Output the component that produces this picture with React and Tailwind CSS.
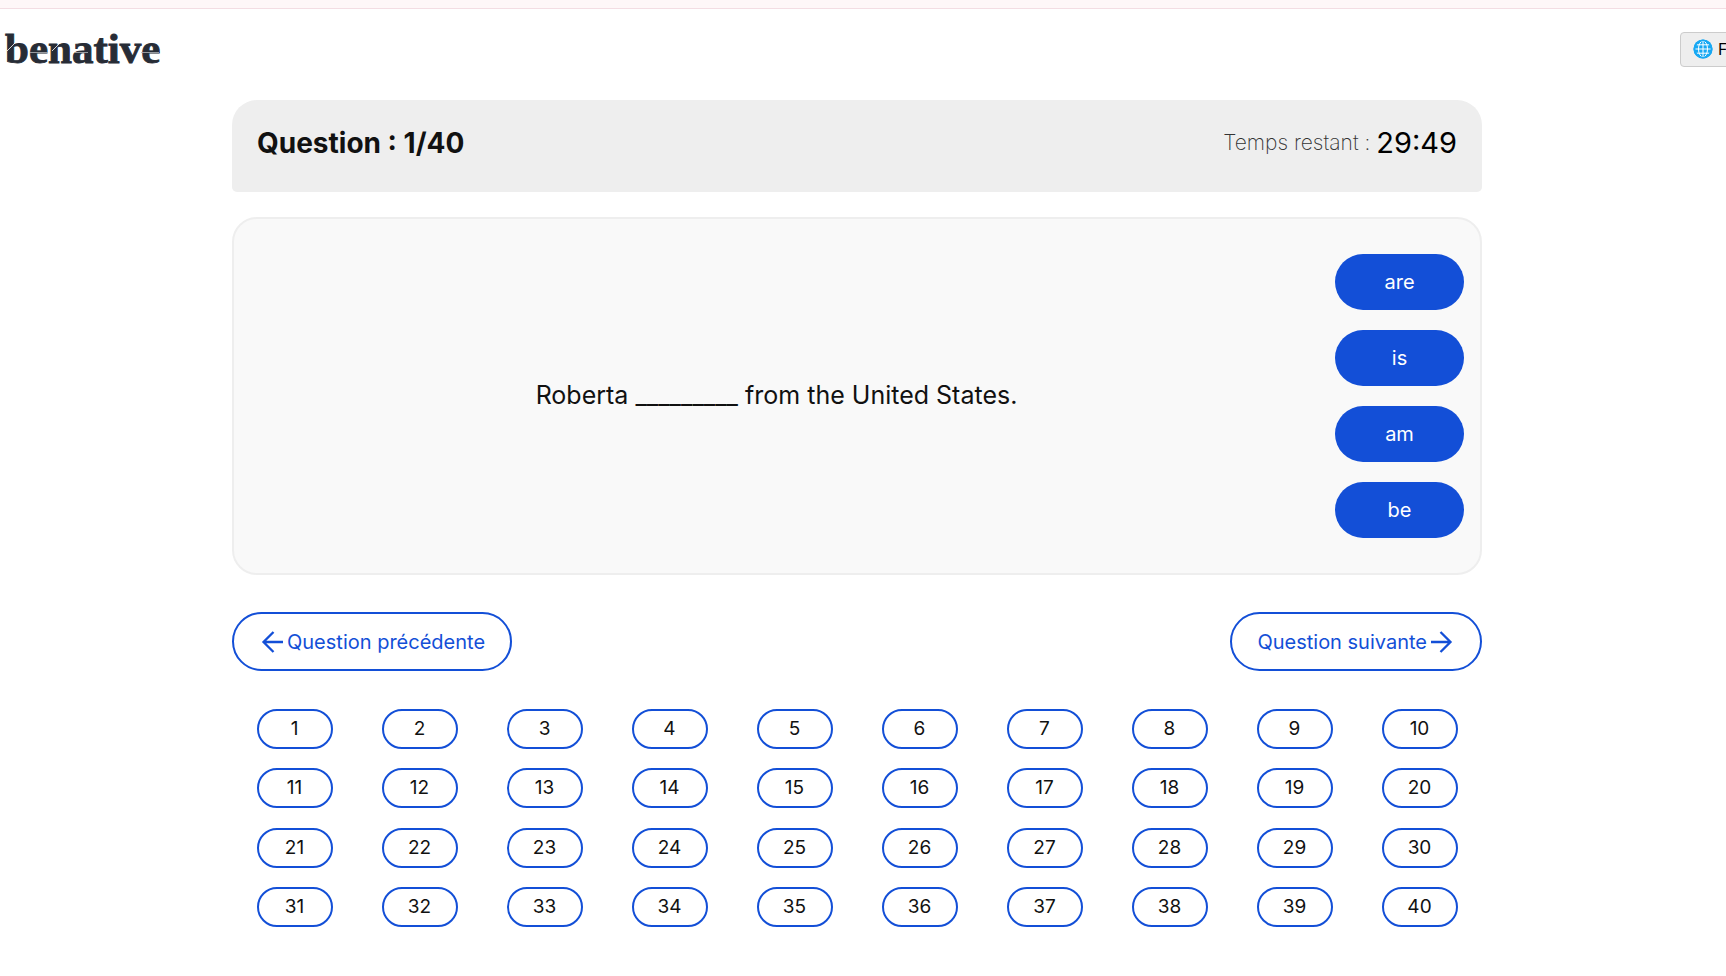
import { useState } from "react";

const choices = ["are", "is", "am", "be"];
const questions = Array.from({ length: 40 }, (_, i) => i + 1);

function Logo() {
    return (
        <svg className="h-12 w-[170px]" viewBox="0 0 170 48">
            <text x="5" y="38" fontSize="43" fontWeight="700" fill="#272c36" stroke="#272c36" strokeWidth="0.9" className="font-['Liberation_Serif',serif]">
                benative
            </text>
            <path d="M7 26l8-8M52 26l8-8" stroke="#ffffff" strokeWidth="0.8" />
            <path d="M30 27.5h18M75 27.5h13M141 27.5h18" stroke="#b4b6ba" strokeWidth="0.8" />
        </svg>
    );
}

function Globe() {
    return (
        <svg className="size-5 shrink-0" viewBox="0 0 20 20" fill="none" stroke="#17a8f3" strokeWidth="1.9" aria-hidden="true">
            <circle cx="10" cy="10" r="9.5" fill="#17a8f3" stroke="none" />
            <g stroke="#ffffff" strokeWidth="1">
                <ellipse cx="10" cy="10" rx="4.5" ry="8" />
                <path d="M10 2v16M2 10h16M3.6 5.8h12.8M3.6 14.2h12.8" />
            </g>
            <circle cx="10" cy="10" r="8.6" />
        </svg>
    );
}

function Arrow({ direction }) {
    return (
        <svg className="size-6 shrink-0" viewBox="0 0 24 24" fill="none" stroke="currentColor" strokeWidth="2.3" aria-hidden="true">
            <path d={direction === "left" ? "M14.5 2 4.5 12l10 10M4.5 12H24" : "M9.5 2l10 10-10 10M19.5 12H0"} />
        </svg>
    );
}

export default function App() {
    const [current, setCurrent] = useState(1);

    return (
        <div className="overflow-x-hidden bg-white font-['Inter',sans-serif] text-[#111111]">
            <div className="h-[9px] border-b border-[#f3dde3] bg-[#fef7f8]" />

            <header className="flex h-[91px] items-start justify-between">
                <a href="#" className="pt-4">
                    <Logo />
                </a>
                <button className="-mr-6 mt-[23px] flex h-[35px] w-[70px] shrink-0 items-center gap-[5px] rounded border border-[#cccccc] bg-[#eeeeee] pb-0.5 pl-3 text-base text-black">
                    <Globe />
                    FR
                </button>
            </header>

            <div className="pr-3">
                <main className="mx-auto max-w-[1250px]">
                    <div className="flex h-[92px] items-start justify-between rounded-t-[25px] rounded-b-[5px] bg-[#eeeeee] px-[25px] pt-6">
                        <h1 className="text-[28px] leading-[38px] font-bold">Question : {current}/40</h1>
                        <p className="flex items-center gap-1.5 leading-[38px]">
                            <span className="text-[21px] font-extralight text-[#333333]">Temps restant :</span>
                            <span className="text-[29px] text-black">29:49</span>
                        </p>
                    </div>

                    <section className="mt-[25px] flex items-center gap-8 rounded-[25px] border-2 border-[#eeeeee] bg-[#f9f9f9] px-4 py-[35px]">
                        <p className="flex-1 pb-0.5 text-center text-[25px] leading-8">Roberta _________ from the United States.</p>
                        <div className="flex flex-col gap-5">
                            {choices.map((choice) => (
                                <button key={choice} className="h-14 w-[129px] rounded-[28px] bg-[#134fd7] text-xl text-white">
                                    {choice}
                                </button>
                            ))}
                        </div>
                    </section>

                    <nav className="mt-[37px] flex justify-between text-xl text-[#134fd7]">
                        <button
                            onClick={() => setCurrent(Math.max(1, current - 1))}
                            className="flex h-[59px] items-center gap-1 rounded-[30px] border-2 border-[#134fd7] px-[25px]"
                        >
                            <Arrow direction="left" />
                            Question précédente
                        </button>
                        <button
                            onClick={() => setCurrent(Math.min(40, current + 1))}
                            className="flex h-[59px] items-center gap-1 rounded-[30px] border-2 border-[#134fd7] px-[25px]"
                        >
                            Question suivante
                            <Arrow direction="right" />
                        </button>
                    </nav>

                    <div className="mt-[38px] grid min-h-[218px] grid-cols-10 content-between">
                        {questions.map((n) => (
                            <button
                                key={n}
                                onClick={() => setCurrent(n)}
                                className="h-10 w-[76px] justify-self-center rounded-[20px] border-2 border-[#134fd7] text-[19px] leading-6"
                            >
                                {n}
                            </button>
                        ))}
                    </div>
                </main>
            </div>
        </div>
    );
}
